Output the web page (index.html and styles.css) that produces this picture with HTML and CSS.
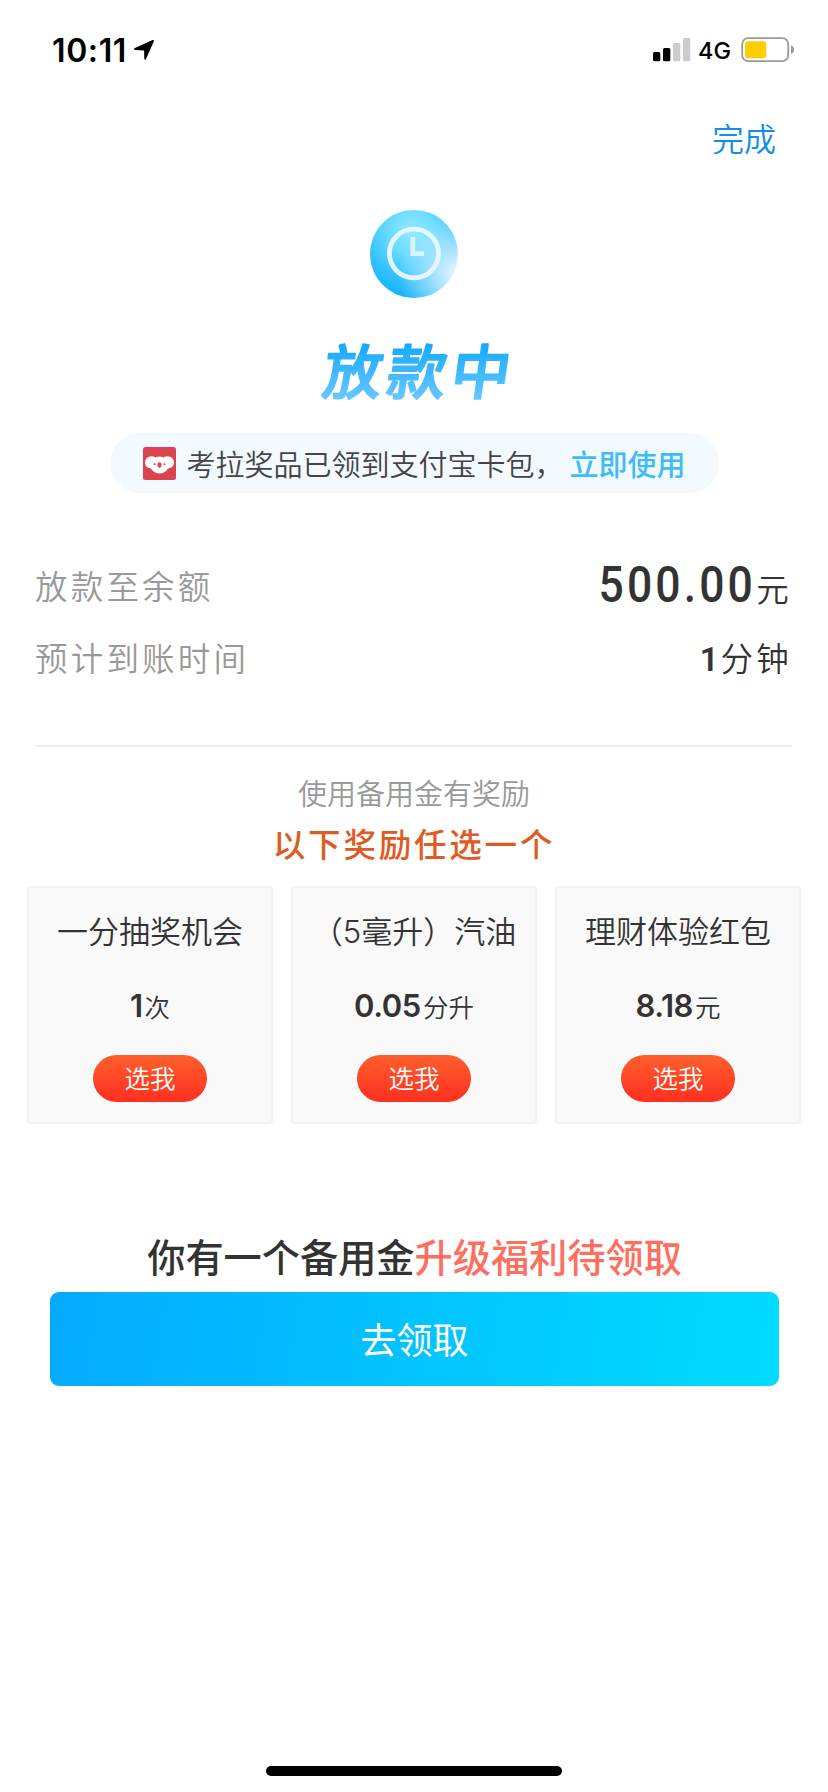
FILE: index.html
```html
<!DOCTYPE html>
<html lang="zh-CN">
<head>
    <meta charset="UTF-8">
    <meta name="viewport" content="width=device-width, initial-scale=1">
    <title>放款中</title>
    <link rel="stylesheet" href="styles.css">
</head>
<body>
    <div class="status-bar">
        <div class="clock">
            <span>10:11</span>
            <svg class="location" width="22" height="22" viewBox="0 0 22 22">
                <path d="M1.9 9.1 L19.6 1.1 Q21.4 0.5 20.8 2.4 L13 20 Q12 21.8 11.3 19.8 L11.1 11.4 L2 11.1 Q0 10.2 1.9 9.1 Z"/>
            </svg>
        </div>
        <div class="status-icons">
            <svg width="38" height="24" viewBox="0 0 38 24">
                <rect x="0" y="14" width="7.3" height="9.3" rx="1.5"/>
                <rect x="10" y="10" width="7.3" height="13.3" rx="1.5"/>
                <rect x="20" y="5" width="7.3" height="18.3" rx="1.5" fill="#ccc"/>
                <rect x="30" y="0" width="7.3" height="23.3" rx="1.5" fill="#ccc"/>
            </svg>
            <span class="network">4G</span>
            <svg width="54" height="26" viewBox="0 0 54 26">
                <rect x="1.2" y="1.2" width="46" height="23" rx="6" fill="none" stroke="#999" stroke-width="1.8"/>
                <rect x="4" y="4.2" width="21.3" height="17" rx="3" fill="#fc0"/>
                <path d="M50 8.3 Q53 9.7 53 12.7 Q53 15.7 50 17.1 Z" fill="#999"/>
            </svg>
        </div>
    </div>

    <div class="nav">
        <a class="done">完成</a>
    </div>

    <div class="hero">
        <div class="clock-badge">
            <svg width="88" height="88" viewBox="0 0 88 88">
                <ellipse cx="44" cy="43.5" rx="24.6" ry="24.3" fill="none" stroke="#e2f7ff" stroke-width="4.8"/>
                <path d="M42.8 27 V43.6 H54" fill="none" stroke="#d8f5ff" stroke-width="4.8"/>
            </svg>
        </div>
        <svg class="title" width="260" height="100" viewBox="0 0 260 100">
            <defs>
                <linearGradient id="titleFill" gradientUnits="userSpaceOnUse" x1="0" y1="20" x2="0" y2="80">
                    <stop offset="0" stop-color="#12a8ff"/>
                    <stop offset="1" stop-color="#6cc9ff"/>
                </linearGradient>
            </defs>
            <text class="title-text" x="47" y="72" transform="skewX(-8)">放款中</text>
        </svg>
    </div>

    <div class="notice">
        <svg width="33" height="33" viewBox="0 0 33 33">
            <rect width="33" height="33" rx="2.5" fill="#db434e"/>
            <path d="M7 9.4 Q10.5 8.6 12.3 10.6 Q16.5 8.6 20.7 10.6 Q22.5 8.6 26 9.4 Q31 10.6 31 15.5 Q31 20.6 25.3 21.6 Q21.5 26.6 16.5 26.6 Q11.5 26.6 7.7 21.6 Q2 20.6 2 15.5 Q2 10.6 7 9.4 Z" fill="#fff"/>
            <ellipse cx="16.5" cy="18" rx="2" ry="2.8" fill="#db434e"/>
            <circle cx="11.5" cy="17.3" r="1" fill="#db434e"/>
            <circle cx="21.5" cy="17.3" r="1" fill="#db434e"/>
        </svg>
        <span class="notice-text">考拉奖品已领到支付宝卡包，</span>
        <a class="notice-link">立即使用</a>
    </div>

    <div class="details">
        <div class="row">
            <span class="label">放款至余额</span>
            <span class="value total"><b class="amount">500.00</b>元</span>
        </div>
        <div class="row">
            <span class="label">预计到账时间</span>
            <span class="value"><b class="minutes">1</b>分钟</span>
        </div>
    </div>

    <div class="reward">
        <p class="reward-tip">使用备用金有奖励</p>
        <h2>以下奖励任选一个</h2>
        <div class="cards">
            <div class="card">
                <div class="card-title">一分抽奖机会</div>
                <div class="card-value"><b>1</b>次</div>
                <button class="pick">选我</button>
            </div>
            <div class="card">
                <div class="card-title">（5毫升）汽油</div>
                <div class="card-value"><b>0.05</b>分升</div>
                <button class="pick">选我</button>
            </div>
            <div class="card">
                <div class="card-title">理财体验红包</div>
                <div class="card-value"><b>8.18</b>元</div>
                <button class="pick">选我</button>
            </div>
        </div>
    </div>

    <div class="upgrade">
        <h3>你有一个备用金<span>升级福利待领取</span></h3>
        <button class="claim">去领取</button>
    </div>

    <div class="home-indicator"></div>
</body>
</html>
```

FILE: styles.css
```css
* {
    box-sizing: border-box;
}
body {
    margin: 0;
    width: 828px;
    height: 1792px;
    display: flex;
    flex-direction: column;
    background-color: #fff;
    color: #333;
    font-family: Inter, "Noto Sans CJK SC", sans-serif;
    font-weight: 350;
    overflow: hidden;
}
p, h2, h3 {
    margin: 0;
}
button {
    border: none;
    padding: 0;
    font-family: inherit;
    font-weight: 350;
    color: #fff;
}

/* status bar */
.status-bar {
    height: 100px;
    padding: 0 33px 0 52px;
    display: flex;
    justify-content: space-between;
    align-items: center;
    color: #000;
}
.clock {
    display: flex;
    align-items: center;
    gap: 6px;
    font-size: 32px;
    font-weight: 600;
    letter-spacing: 0.6px;
}
.status-icons {
    display: flex;
    align-items: center;
}
.network {
    margin: 0 10px 0 7px;
    font-size: 23.5px;
    font-weight: 500;
}

.nav {
    height: 80px;
    padding: 0 52px 0 0;
    display: flex;
    justify-content: flex-end;
    align-items: center;
}
.done {
    color: #108ee9;
    font-size: 32px;
    line-height: 40px;
}

/* hero */
.hero {
    padding-top: 30px;
    display: flex;
    flex-direction: column;
    align-items: center;
}
.clock-badge {
    width: 88px;
    height: 88px;
    border-radius: 50%;
    background:
        radial-gradient(circle at 100% 72%, #eef9ff 0, rgba(205, 238, 255, 0.75) 22%, rgba(160, 225, 255, 0) 55%),
        radial-gradient(circle at 48% 24%, #96e9ff 0, #6bdcff 28%, #2fc0ff 60%, #0cb0ff 88%);
}
.title {
    margin-top: 24px;
}
.title-text {
    font-family: "Noto Sans CJK SC", sans-serif;
    font-size: 59px;
    font-weight: 500;
    letter-spacing: 5px;
    fill: url(#titleFill);
    stroke: url(#titleFill);
    stroke-width: 1.8px;
    stroke-linejoin: round;
}

.notice {
    align-self: center;
    width: 609px;
    height: 60px;
    margin-top: 11px;
    padding: 0 0 0 33px;
    border-radius: 30px;
    background-color: #f2faff;
    display: flex;
    align-items: center;
    font-size: 29px;
    white-space: nowrap;
}
.notice-text {
    margin-left: 11px;
    color: #444;
}
.notice-link {
    margin-left: 6px;
    color: #3dbcf8;
    font-weight: 500;
}

/* loan details */
.details {
    margin: 55px 36px 0 35px;
    height: 199px;
    border-bottom: 2px solid #eee;
}
.row {
    height: 72px;
    display: flex;
    justify-content: space-between;
    align-items: center;
    font-size: 32.5px;
    letter-spacing: 3.2px;
}
.label {
    color: #999;
}
.value {
    padding-top: 8px;
    line-height: 72px;
}
.total {
    padding-top: 14px;
}
/* narrow DIN-like digits */
.amount {
    display: inline-block;
    font-family: Roboto, sans-serif;
    font-size: 50px;
    font-weight: 500;
    letter-spacing: 3.5px;
    line-height: 1;
    transform: scaleX(0.89);
    transform-origin: right;
}
.minutes {
    font-family: Roboto, sans-serif;
    font-size: 33px;
    font-weight: 600;
    letter-spacing: 2px;
}

/* rewards */
.reward {
    padding: 26px 27px 0;
    text-align: center;
}
.reward-tip {
    color: #999;
    font-size: 29px;
    line-height: 44px;
}
.reward h2 {
    color: #e05a24;
    font-size: 32.5px;
    font-weight: 500;
    line-height: 58px;
    letter-spacing: 2.8px;
}
.cards {
    margin-top: 11px;
    display: grid;
    grid-template-columns: repeat(3, 1fr);
    gap: 18px;
}
.card {
    height: 238px;
    padding-top: 20px;
    border: 2px solid #f2f2f2;
    border-radius: 4px;
    background-color: #f9f9f9;
    display: flex;
    flex-direction: column;
    align-items: center;
}
.card-title {
    font-size: 31px;
    line-height: 48px;
    white-space: nowrap;
}
.card-value {
    margin-top: 27px;
    font-size: 25.5px;
    line-height: 46px;
}
.card-value b {
    font-size: 31px;
    font-weight: 600;
    letter-spacing: -0.4px;
    margin-right: 2px;
}
.pick {
    margin-top: 24px;
    width: 114px;
    height: 47px;
    border-radius: 24px;
    background: linear-gradient(#ff5f2c, #ff2f20);
    font-size: 25.5px;
    line-height: 45px;
}

/* upgrade banner */
.upgrade {
    margin-top: 106px;
    padding: 0 49px 0 50px;
    text-align: center;
}
.upgrade h3 {
    font-size: 38.2px;
    font-weight: 500;
    line-height: 56px;
}
.upgrade h3 span {
    color: #ff6f61;
}
.claim {
    display: block;
    width: 100%;
    height: 94px;
    margin-top: 6px;
    padding-bottom: 2px;
    border-radius: 9px;
    background: linear-gradient(100deg, #05aaff, #00dcff);
    font-size: 36px;
    font-weight: 400;
}

.home-indicator {
    align-self: center;
    width: 296px;
    height: 10px;
    margin: auto 0 16px;
    border-radius: 5px;
    background-color: #000;
}
```
